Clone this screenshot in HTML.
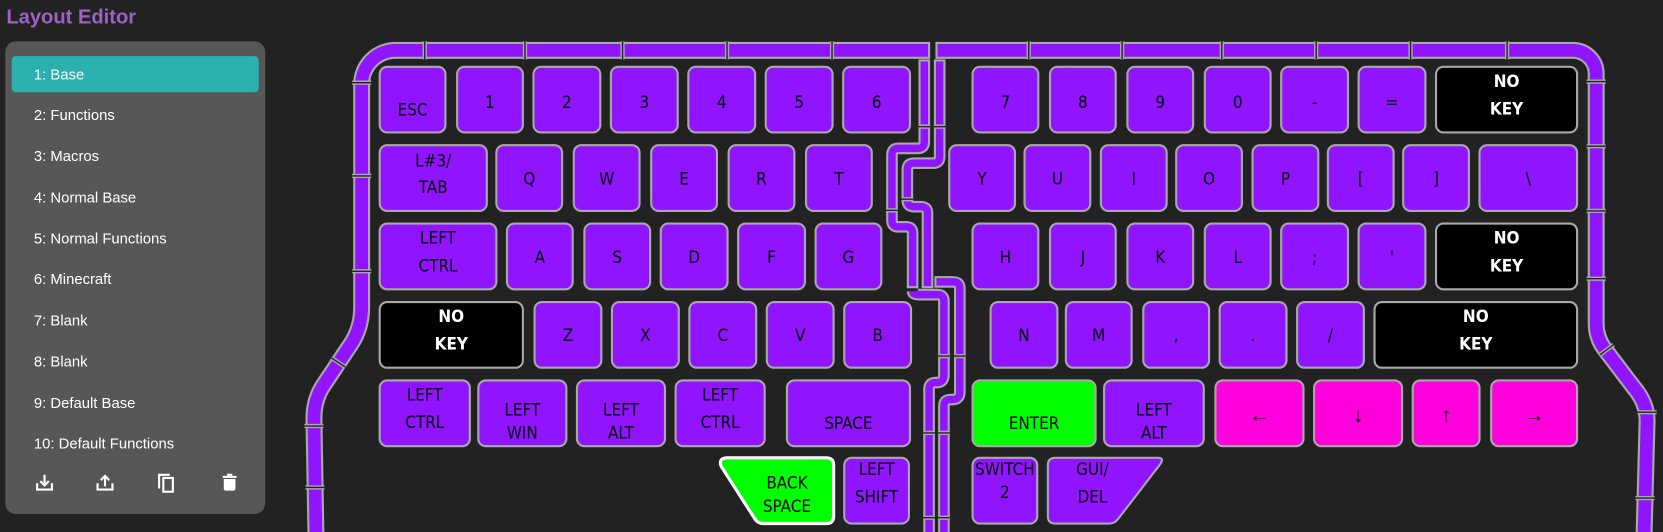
<!DOCTYPE html>
<html><head><meta charset="utf-8"><style>
html,body{margin:0;padding:0;background:#222222;overflow:hidden}
svg{display:block}
.k{stroke:#a8a8a8;stroke-width:2}
.p{fill:#9114ff}.g{fill:#00ff00}.m{fill:#ff00dd}.b{fill:#000}
.t{font-family:"Liberation Sans Narrow","DejaVu Sans Condensed","Liberation Sans",sans-serif;font-size:16px;fill:#000;text-anchor:middle}
.w{fill:#fff;font-weight:bold}
.a{font-family:"Liberation Serif","DejaVu Serif",serif;font-size:20px;fill:#000;text-anchor:middle}
.s{font-family:"Liberation Sans",sans-serif;font-size:14px;fill:#fff}
.br{stroke:#a8a8a8;stroke-width:4}
.bd{stroke:#222;stroke-width:1.3}
</style></head><body>
<svg width="1663" height="532" viewBox="0 0 1568 502" preserveAspectRatio="none" xmlns="http://www.w3.org/2000/svg">
<rect width="1568" height="502" fill="#222222"/>
<text x="6" y="22" font-family="Liberation Sans, sans-serif" font-size="19" font-weight="600" fill="#9d62c4">Layout Editor</text>
<rect x="5" y="39" width="245" height="446" rx="10" fill="#575757"/>
<rect x="11" y="53" width="233" height="34" rx="4" fill="#2bb0b0"/>
<text class="s" x="32" y="75">1: Base</text>
<text class="s" x="32" y="113">2: Functions</text>
<text class="s" x="32" y="152">3: Macros</text>
<text class="s" x="32" y="191">4: Normal Base</text>
<text class="s" x="32" y="230">5: Normal Functions</text>
<text class="s" x="32" y="268">6: Minecraft</text>
<text class="s" x="32" y="307">7: Blank</text>
<text class="s" x="32" y="346">8: Blank</text>
<text class="s" x="32" y="385">9: Default Base</text>
<text class="s" x="32" y="423">10: Default Functions</text>
<g stroke="#fff" stroke-width="2" fill="none">
<path d="M35 456 v6 h14 v-6"/><path d="M42 448 v10 M38 454 l4 4 4 -4"/>
<path d="M92 456 v6 h14 v-6"/><path d="M99 459 v-10 M95 453 l4 -4 4 4"/>
<rect x="154" y="451" width="9" height="13"/><path d="M150 461 V448 H160"/>
</g>
<g fill="#fff"><rect x="210" y="449" width="13" height="2"/><rect x="214" y="447" width="5" height="2"/><path d="M211 452 h11 v9 q0 2 -2 2 h-7 q-2 0 -2 -2z"/></g>

<!-- outer band -->
<g fill="none" stroke-linejoin="round">
<path d="M877 47.5 H373 A32 32 0 0 0 341 79.5 V290 Q341 310 330 326 L306 362 Q296 376 296 395 L298 510" stroke="#a8a8a8" stroke-width="16"/>
<path d="M877 47.5 H373 A32 32 0 0 0 341 79.5 V290 Q341 310 330 326 L306 362 Q296 376 296 395 L298 510" stroke="#9114ff" stroke-width="12"/>
<path d="M882 47.5 H1483 A22 22 0 0 1 1505 69.5 V305 Q1505 318 1512 328 L1540 365 Q1553 380 1553 397 L1550 510" stroke="#a8a8a8" stroke-width="16"/>
<path d="M882 47.5 H1483 A22 22 0 0 1 1505 69.5 V305 Q1505 318 1512 328 L1540 365 Q1553 380 1553 397 L1550 510" stroke="#9114ff" stroke-width="12"/>
<path d="M876 47.5 H883" stroke="#222" stroke-width="18"/>
<path d="M876 39.5 V55.5 M883 39.5 V55.5" stroke="#a8a8a8" stroke-width="2"/>
</g>
<g>
<path class="br" d="M400.5 39 V56 M495 39 V56 M587 39 V56 M685.5 39 V56 M784.5 39 V56 M970 39 V56 M1058 39 V56 M1152 39 V56 M1241 39 V56 M1330 39 V56 M1421 39 V56 M332 78 H350 M332 166 H350 M332 256 H350 M312.4 337.6 L325.6 346.4 M287 402 H305 M288 460 H306 M1496 77 H1514 M1496 138 H1514 M1496 199 H1514 M1496 263 H1514 M1508.6 334.8 L1521.4 325.2 M1544 389 H1562 M1542 470 H1560"/>
<path class="bd" d="M400.5 39 V56 M495 39 V56 M587 39 V56 M685.5 39 V56 M784.5 39 V56 M970 39 V56 M1058 39 V56 M1152 39 V56 M1241 39 V56 M1330 39 V56 M1421 39 V56 M332 78 H350 M332 166 H350 M332 256 H350 M312.4 337.6 L325.6 346.4 M287 402 H305 M288 460 H306 M1496 77 H1514 M1496 138 H1514 M1496 199 H1514 M1496 263 H1514 M1508.6 334.8 L1521.4 325.2 M1544 389 H1562 M1542 470 H1560"/>
</g>
<!-- middle channels -->
<g fill="none" stroke-linejoin="round">
<path id="pa" d="M871.5 58 V134 Q871.5 140 865.5 140 H847 Q841 140 841 146 V208 Q841 214 847 214 H854.5 Q860.5 214 860.5 220 V271" stroke="#a8a8a8" stroke-width="11"/>
<path d="M871.5 58 V134 Q871.5 140 865.5 140 H847 Q841 140 841 146 V208 Q841 214 847 214 H854.5 Q860.5 214 860.5 220 V271" stroke="#9114ff" stroke-width="7"/>
<path d="M860.5 275 Q860.5 278 866 278 H884 Q890 278 890 284 V354 Q890 361 883 361 H882 Q876 361 876 367 V510" stroke="#a8a8a8" stroke-width="11"/>
<path d="M860.5 275 Q860.5 278 866 278 H884 Q890 278 890 284 V354 Q890 361 883 361 H882 Q876 361 876 367 V510" stroke="#9114ff" stroke-width="7"/>
<path d="M886 58 V148 Q886 154 880 154 H861.5 Q855.5 154 855.5 160 V189 Q855.5 195 861.5 195 H868.5 Q874.5 195 874.5 201 V271" stroke="#a8a8a8" stroke-width="11"/>
<path d="M886 58 V148 Q886 154 880 154 H861.5 Q855.5 154 855.5 160 V189 Q855.5 195 861.5 195 H868.5 Q874.5 195 874.5 201 V271" stroke="#9114ff" stroke-width="7"/>
<path d="M883 266 H899 Q905 266 905 272 V370 Q905 377 898 377 H896 Q890 377 890 383 V510" stroke="#a8a8a8" stroke-width="11"/>
<path d="M883 266 H899 Q905 266 905 272 V370 Q905 377 898 377 H896 Q890 377 890 383 V510" stroke="#9114ff" stroke-width="7"/>
</g>
<path stroke="#a8a8a8" stroke-width="2" d="M866 57 H877 M880.5 57 H891.5 M855 271 H866 M869 271 H880 M882 260.5 V271.5"/>
<path class="br" d="M866 119.5 H877 M880.5 119.5 H891.5 M835.5 198.5 H846.5 M850 188 H861 M884.5 336 H895.5 M899.5 336 H910.5 M870.5 408.5 H881.5 M884.5 408.5 H895.5 M870.5 488.5 H881.5 M884.5 488.5 H895.5"/>
<path class="bd" d="M866 119.5 H877 M880.5 119.5 H891.5 M835.5 198.5 H846.5 M850 188 H861 M884.5 336 H895.5 M899.5 336 H910.5 M870.5 408.5 H881.5 M884.5 408.5 H895.5 M870.5 488.5 H881.5 M884.5 488.5 H895.5"/>

<!-- Row 1 -->
<g class="k">
<rect class="p" x="358" y="63" width="62" height="62" rx="7"/>
<rect class="p" x="431" y="63" width="62" height="62" rx="7"/>
<rect class="p" x="503" y="63" width="63" height="62" rx="7"/>
<rect class="p" x="576" y="63" width="63" height="62" rx="7"/>
<rect class="p" x="649" y="63" width="63" height="62" rx="7"/>
<rect class="p" x="722" y="63" width="63" height="62" rx="7"/>
<rect class="p" x="795" y="63" width="63" height="62" rx="7"/>
<rect class="p" x="917" y="63" width="62" height="62" rx="7"/>
<rect class="p" x="990" y="63" width="62" height="62" rx="7"/>
<rect class="p" x="1063" y="63" width="62" height="62" rx="7"/>
<rect class="p" x="1136" y="63" width="62" height="62" rx="7"/>
<rect class="p" x="1208" y="63" width="63" height="62" rx="7"/>
<rect class="p" x="1281" y="63" width="63" height="62" rx="7"/>
<rect class="b" x="1354" y="63" width="133" height="62" rx="7"/>
<!-- Row 2 -->
<rect class="p" x="358" y="137" width="101" height="62" rx="7"/>
<rect class="p" x="468" y="137" width="62" height="62" rx="7"/>
<rect class="p" x="541" y="137" width="62" height="62" rx="7"/>
<rect class="p" x="614" y="137" width="62" height="62" rx="7"/>
<rect class="p" x="687" y="137" width="62" height="62" rx="7"/>
<rect class="p" x="760" y="137" width="62" height="62" rx="7"/>
<rect class="p" x="895" y="137" width="62" height="62" rx="7"/>
<rect class="p" x="966" y="137" width="62" height="62" rx="7"/>
<rect class="p" x="1038" y="137" width="62" height="62" rx="7"/>
<rect class="p" x="1109" y="137" width="62" height="62" rx="7"/>
<rect class="p" x="1181" y="137" width="62" height="62" rx="7"/>
<rect class="p" x="1252" y="137" width="62" height="62" rx="7"/>
<rect class="p" x="1323" y="137" width="62" height="62" rx="7"/>
<rect class="p" x="1395" y="137" width="92" height="62" rx="7"/>
<!-- Row 3 -->
<rect class="p" x="358" y="211" width="110" height="62" rx="7"/>
<rect class="p" x="478" y="211" width="62" height="62" rx="7"/>
<rect class="p" x="551" y="211" width="62" height="62" rx="7"/>
<rect class="p" x="623" y="211" width="63" height="62" rx="7"/>
<rect class="p" x="696" y="211" width="63" height="62" rx="7"/>
<rect class="p" x="769" y="211" width="62" height="62" rx="7"/>
<rect class="p" x="917" y="211" width="62" height="62" rx="7"/>
<rect class="p" x="990" y="211" width="62" height="62" rx="7"/>
<rect class="p" x="1063" y="211" width="62" height="62" rx="7"/>
<rect class="p" x="1136" y="211" width="62" height="62" rx="7"/>
<rect class="p" x="1208" y="211" width="63" height="62" rx="7"/>
<rect class="p" x="1281" y="211" width="63" height="62" rx="7"/>
<rect class="b" x="1354" y="211" width="133" height="62" rx="7"/>
<!-- Row 4 -->
<rect class="b" x="358" y="285" width="135" height="62" rx="7"/>
<rect class="p" x="504" y="285" width="63" height="62" rx="7"/>
<rect class="p" x="577" y="285" width="63" height="62" rx="7"/>
<rect class="p" x="650" y="285" width="63" height="62" rx="7"/>
<rect class="p" x="723" y="285" width="63" height="62" rx="7"/>
<rect class="p" x="796" y="285" width="63" height="62" rx="7"/>
<rect class="p" x="934" y="285" width="63" height="62" rx="7"/>
<rect class="p" x="1005" y="285" width="62" height="62" rx="7"/>
<rect class="p" x="1078" y="285" width="62" height="62" rx="7"/>
<rect class="p" x="1150" y="285" width="63" height="62" rx="7"/>
<rect class="p" x="1223" y="285" width="63" height="62" rx="7"/>
<rect class="b" x="1296" y="285" width="191" height="62" rx="7"/>
<!-- Row 5 -->
<rect class="p" x="358" y="359" width="85" height="62" rx="7"/>
<rect class="p" x="451" y="359" width="83" height="62" rx="7"/>
<rect class="p" x="544" y="359" width="83" height="62" rx="7"/>
<rect class="p" x="637" y="359" width="84" height="62" rx="7"/>
<rect class="p" x="742" y="359" width="116" height="62" rx="7"/>
<rect class="g" x="917" y="359" width="116" height="62" rx="7"/>
<rect class="p" x="1041" y="359" width="94" height="62" rx="7"/>
<rect class="m" x="1146" y="359" width="83" height="62" rx="7"/>
<rect class="m" x="1239" y="359" width="83" height="62" rx="7"/>
<rect class="m" x="1332" y="359" width="63" height="62" rx="7"/>
<rect class="m" x="1406" y="359" width="81" height="62" rx="7"/>
<!-- Row 6 -->
<rect class="p" x="796" y="432" width="61" height="62" rx="7"/>
<rect class="p" x="917" y="432" width="61" height="62" rx="7"/>
<path class="p" d="M995 432 H1092 Q1098 432 1094 438 L1054 490 Q1051 494 1046 494 H995 Q988 494 988 487 V439 Q988 432 995 432Z"/>
</g>
<path d="M686 432 H779 Q786 432 786 439 V487 Q786 494 779 494 H720 Q715 494 712 490 L680 440 Q677 432 686 432Z" fill="#00ff00" stroke="#fff" stroke-width="3" stroke-linejoin="round"/>

<!-- labels -->
<text class="t" x="389" y="109">ESC</text>
<text class="t" x="462" y="102">1</text>
<text class="t" x="534.5" y="102">2</text>
<text class="t" x="607.5" y="102">3</text>
<text class="t" x="680.5" y="102">4</text>
<text class="t" x="753.5" y="102">5</text>
<text class="t" x="826.5" y="102">6</text>
<text class="t" x="948" y="102">7</text>
<text class="t" x="1021" y="102">8</text>
<text class="t" x="1094" y="102">9</text>
<text class="t" x="1167" y="102">0</text>
<text class="t" x="1239.5" y="102">-</text>
<text class="t" x="1312.5" y="102">=</text>
<text class="t w" x="1420.5" y="82">NO</text><text class="t w" x="1420.5" y="108">KEY</text>

<text class="t" x="408.5" y="157">L#3/</text><text class="t" x="408.5" y="182">TAB</text>
<text class="t" x="499" y="174">Q</text>
<text class="t" x="572" y="174">W</text>
<text class="t" x="645" y="174">E</text>
<text class="t" x="718" y="174">R</text>
<text class="t" x="791" y="174">T</text>
<text class="t" x="926" y="174">Y</text>
<text class="t" x="997" y="174">U</text>
<text class="t" x="1069" y="174">I</text>
<text class="t" x="1140" y="174">O</text>
<text class="t" x="1212" y="174">P</text>
<text class="t" x="1283" y="174">[</text>
<text class="t" x="1354" y="174">]</text>
<text class="t" x="1441" y="174">\</text>

<text class="t" x="413" y="230">LEFT</text><text class="t" x="413" y="256">CTRL</text>
<text class="t" x="509" y="248">A</text>
<text class="t" x="582" y="248">S</text>
<text class="t" x="654.5" y="248">D</text>
<text class="t" x="727.5" y="248">F</text>
<text class="t" x="800" y="248">G</text>
<text class="t" x="948" y="248">H</text>
<text class="t" x="1021" y="248">J</text>
<text class="t" x="1094" y="248">K</text>
<text class="t" x="1167" y="248">L</text>
<text class="t" x="1239.5" y="248">;</text>
<text class="t" x="1312.5" y="248">'</text>
<text class="t w" x="1420.5" y="230">NO</text><text class="t w" x="1420.5" y="256">KEY</text>

<text class="t w" x="425.5" y="304">NO</text><text class="t w" x="425.5" y="330">KEY</text>
<text class="t" x="535.5" y="322">Z</text>
<text class="t" x="608.5" y="322">X</text>
<text class="t" x="681.5" y="322">C</text>
<text class="t" x="754.5" y="322">V</text>
<text class="t" x="827.5" y="322">B</text>
<text class="t" x="965.5" y="322">N</text>
<text class="t" x="1036" y="322">M</text>
<text class="t" x="1109" y="322">,</text>
<text class="t" x="1181.5" y="322">.</text>
<text class="t" x="1254.5" y="322">/</text>
<text class="t w" x="1391.5" y="304">NO</text><text class="t w" x="1391.5" y="330">KEY</text>

<text class="t" x="400.5" y="378">LEFT</text><text class="t" x="400.5" y="404">CTRL</text>
<text class="t" x="492.5" y="392">LEFT</text><text class="t" x="492.5" y="414">WIN</text>
<text class="t" x="585.5" y="392">LEFT</text><text class="t" x="585.5" y="414">ALT</text>
<text class="t" x="679" y="378">LEFT</text><text class="t" x="679" y="404">CTRL</text>
<text class="t" x="800" y="405">SPACE</text>
<text class="t" x="975" y="405">ENTER</text>
<text class="t" x="1088" y="392">LEFT</text><text class="t" x="1088" y="414">ALT</text>
<text class="a" x="1187.5" y="398">←</text>
<text class="a" x="1280.5" y="398">↓</text>
<text class="a" x="1363.5" y="398">↑</text>
<text class="a" x="1446.5" y="398">→</text>

<text class="t" x="742" y="461">BACK</text><text class="t" x="742" y="483">SPACE</text>
<text class="t" x="826.5" y="448">LEFT</text><text class="t" x="826.5" y="474">SHIFT</text>
<text class="t" x="947.5" y="448">SWITCH</text><text class="t" x="947.5" y="470">2</text>
<text class="t" x="1030" y="448">GUI/</text><text class="t" x="1030" y="474">DEL</text>
</svg>
</body></html>
